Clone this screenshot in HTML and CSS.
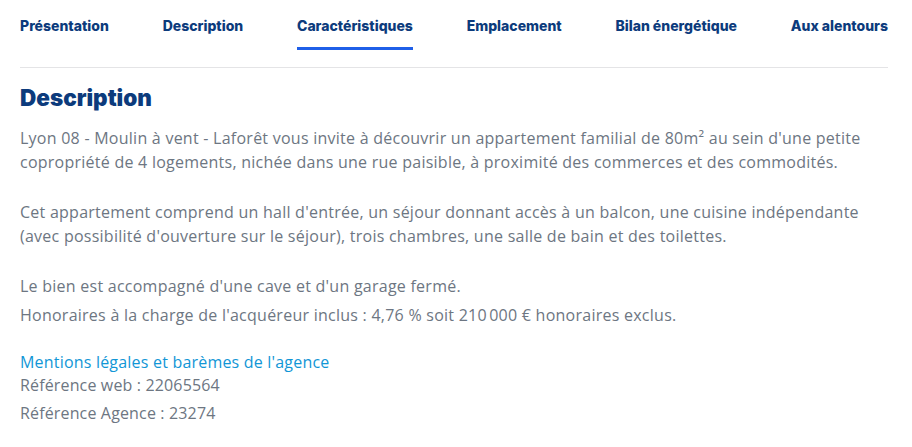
FILE: index.html
```html
<!DOCTYPE html>
<html lang="fr">
<head>
<meta charset="utf-8">
<link rel="stylesheet" href="styles.css">
</head>
<body>
<div class="page">
  <nav class="tabs">
    <a class="tab">Présentation</a>
    <a class="tab">Description</a>
    <a class="tab active">Caractéristiques</a>
    <a class="tab">Emplacement</a>
    <a class="tab">Bilan énergétique</a>
    <a class="tab">Aux alentours</a>
  </nav>
  <div class="divider"></div>
  <h2 class="title">Description</h2>
  <p class="para first">Lyon 08 - Moulin à vent - Laforêt vous invite à découvrir un appartement familial de 80m² au sein d'une petite copropriété de 4 logements, nichée dans une rue paisible, à proximité des commerces et des commodités.</p>
  <p class="para gap">Cet appartement comprend un hall d'entrée, un séjour donnant accès à un balcon, une cuisine indépendante (avec possibilité d'ouverture sur le séjour), trois chambres, une salle de bain et des toilettes.</p>
  <p class="para gap">Le bien est accompagné d'une cave et d'un garage fermé.</p>
  <p class="para small-gap">Honoraires à la charge de l'acquéreur inclus : 4,76 % soit 210&#8239;000 € honoraires exclus.</p>
  <a class="link">Mentions légales et barèmes de l'agence</a>
  <p class="ref">Référence web : 22065564</p>
  <p class="ref second">Référence Agence : 23274</p>
</div>
</body>
</html>
```
FILE: styles.css
```css
* { box-sizing: border-box; }
body {
  margin: 0;
  background: #fff;
  font-family: "Open Sans", sans-serif;
}
.page {
  padding: 0 24px 0 20px;
}
.tabs {
  display: flex;
  justify-content: space-between;
}
.tab {
  display: block;
  padding-top: 17px;
  padding-bottom: 12px;
  line-height: 18px;
  font-family: "Inter", sans-serif;
  font-size: 14px;
  font-weight: 800;
  color: #0c3b7c;
  border-bottom: 3px solid transparent;
}
.tab.active {
  border-bottom-color: #1f5fe8;
}
.divider {
  margin-top: 17px;
  height: 1px;
  background: #e4e4e6;
}
.title {
  margin: 16px 0 0;
  font-family: "Inter", sans-serif;
  font-size: 22.5px;
  line-height: 28px;
  font-weight: 900;
  color: #0c3b7c;
}
.para {
  margin: 0;
  font-size: 16px;
  line-height: 24px;
  letter-spacing: 0.25px;
  color: #6d7682;
  font-weight: 500;
}
.para.first { margin-top: 14px; }
.para.gap { margin-top: 26px; }
.para.small-gap { margin-top: 5px; }
.link {
  display: block;
  margin-top: 25px;
  font-size: 16px;
  line-height: 21px;
  letter-spacing: 0.2px;
  color: #1196d6;
  font-weight: 500;
}
.ref {
  margin: 0;
  font-size: 16px;
  line-height: 24px;
  letter-spacing: 0.15px;
  color: #6d7682;
  font-weight: 500;
}
.ref.second { margin-top: 4px; }
```
